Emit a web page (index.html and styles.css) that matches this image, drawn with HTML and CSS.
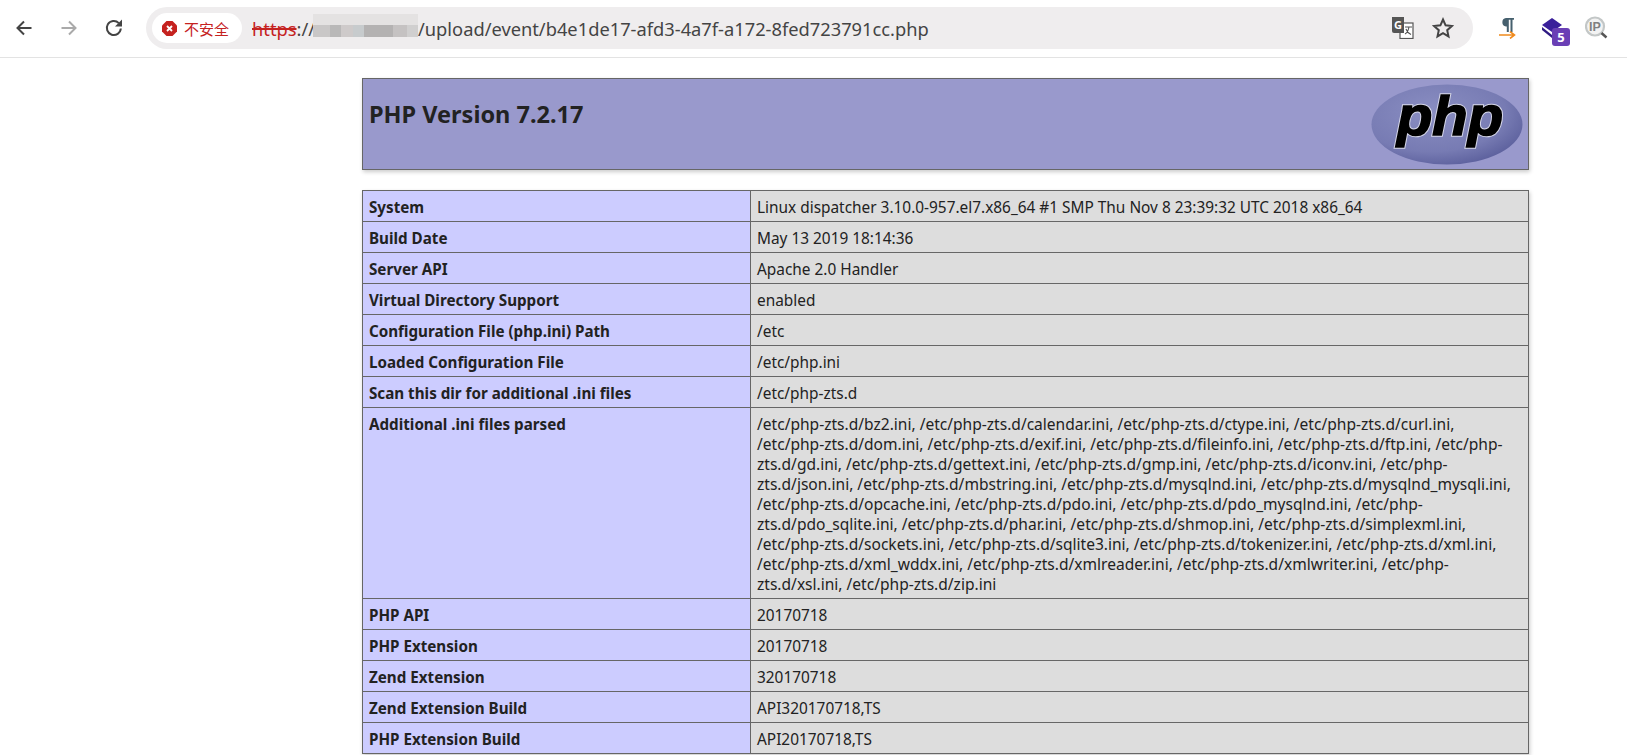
FILE: index.html
```html
<!DOCTYPE html>
<html lang="en">
  <head>
    <meta charset="UTF-8" />
    <title>phpinfo()</title>
    <link rel="stylesheet" href="styles.css">
  </head>
  <body>
    <div class="toolbar">
      <div class="nav-btn">
        <svg width="20" height="20" viewBox="0 0 20 20"><path d="M17.500 10H4M10 3.500L3.500 10l6.500 6.500" fill="none" stroke="#444" stroke-width="2"/></svg>
      </div>
      <div class="nav-btn">
        <svg width="20" height="20" viewBox="0 0 20 20"><path d="M2.500 10H16M10 3.500l6.500 6.500-6.500 6.500" fill="none" stroke="#aaa" stroke-width="2"/></svg>
      </div>
      <div class="nav-btn">
        <svg width="20" height="20" viewBox="0 0 20 20"><path d="M16.800 10.500a7 7 0 1 1-2-5.400" fill="none" stroke="#444" stroke-width="2"/><path d="M18 1.500v7h-7z" fill="#444"/></svg>
      </div>
      <div class="omnibox">
        <div class="chip">
          <svg width="15" height="15" viewBox="0 0 15 15"><path d="M4.500 0h6L15 4.500v6L10.500 15h-6L0 10.500v-6z" fill="#c5221f"/><path d="M5 5l5 5M10 5l-5 5" stroke="#fff" stroke-width="1.800"/></svg>
          <span class="chip-text">不安全</span>
        </div>
        <div class="url">
          <span class="scheme">https</span><span>://</span><span class="blur-host"></span><span>/upload/event/b4e1de17-afd3-4a7f-a172-8fed723791cc.php</span>
        </div>
        <div class="omni-icons">
          <svg width="23" height="22" viewBox="0 0 23 22">
            <rect x="9" y="6" width="13" height="15.500" fill="#fff" stroke="#555" stroke-width="1.200"/>
            <path d="M1 0h12v16H3a2 2 0 0 1-2-2z" fill="#555"/>
            <text x="3" y="12" class="translate-g">G</text>
            <path d="M14 10h7M18 9.500c-.500 4-2 6.500-4 7.500M15 12c1 3 3 4.500 5 5.500" fill="none" stroke="#555" stroke-width="1.100"/>
          </svg>
          <svg width="22" height="22" viewBox="0 0 22 22"><path d="M11 2.500l2.600 5.800 6.300.700-4.700 4.200 1.300 6.200L11 16.200l-5.500 3.200 1.300-6.200L2.100 9l6.300-.7z" fill="none" stroke="#444" stroke-width="2"/></svg>
        </div>
      </div>
      <div class="extensions">
        <div class="ext">
          <svg width="14" height="14" viewBox="0 0 14 14"><path d="M6 0h8v1.800h-1.500V14h-2V1.800H8.800V14h-2V8.500H6A4.300 4.300 0 0 1 6 0z" fill="#46606e"/></svg>
          <svg class="pilcrow-arrow" width="17" height="8" viewBox="0 0 17 8"><path d="M0 4h15M11 .5L15.500 4 11 7.500" fill="none" stroke="#f08a1d" stroke-width="1.600"/></svg>
        </div>
        <div class="ext stack">
          <svg width="22" height="20" viewBox="0 0 22 20"><path d="M11 0l10 7-10 7L1 7z" fill="#3a1f9a"/><path d="M1 9l10 8v3L1 12z" fill="#2e1a82"/></svg>
          <span class="stack-badge">5</span>
        </div>
        <div class="ext">
          <svg width="24" height="24" viewBox="0 0 24 24">
            <circle cx="10" cy="10.500" r="9" fill="#f3f3f3" stroke="#c3c7c7" stroke-width="2.200"/>
            <text x="10" y="15" class="ip-text">IP</text>
            <path d="M16.500 17l5 4.500" stroke="#555" stroke-width="2.500"/>
          </svg>
        </div>
      </div>
    </div>

    <div class="page">
      <div class="center">
        <div class="php-header">
          <h1>PHP Version 7.2.17</h1>
          <svg class="php-logo" width="152" height="81" viewBox="0 0 152 81">
            <defs>
              <radialGradient id="logo-fill" cx="40%" cy="35%" r="70%">
                <stop offset="0" stop-color="#8a8ec2"/>
                <stop offset="0.7" stop-color="#777bb3"/>
                <stop offset="1" stop-color="#5b5f9c"/>
              </radialGradient>
            </defs>
            <ellipse cx="76" cy="40.500" rx="75.500" ry="40" fill="url(#logo-fill)"/>
            <text x="26" y="51" textLength="106" lengthAdjust="spacingAndGlyphs" class="php-mark php-mark-halo">php</text>
            <text x="26" y="51" textLength="106" lengthAdjust="spacingAndGlyphs" class="php-mark">php</text>
          </svg>
        </div>

        <table class="info">
          <tr><td class="e">System</td><td class="v">Linux dispatcher 3.10.0-957.el7.x86_64 #1 SMP Thu Nov 8 23:39:32 UTC 2018 x86_64</td></tr>
          <tr><td class="e">Build Date</td><td class="v">May 13 2019 18:14:36</td></tr>
          <tr><td class="e">Server API</td><td class="v">Apache 2.0 Handler</td></tr>
          <tr><td class="e">Virtual Directory Support</td><td class="v">enabled</td></tr>
          <tr><td class="e">Configuration File (php.ini) Path</td><td class="v">/etc</td></tr>
          <tr><td class="e">Loaded Configuration File</td><td class="v">/etc/php.ini</td></tr>
          <tr><td class="e">Scan this dir for additional .ini files</td><td class="v">/etc/php-zts.d</td></tr>
          <tr><td class="e">Additional .ini files parsed</td><td class="v ini-list">/etc/php-zts.d/bz2.ini, /etc/php-zts.d/calendar.ini, /etc/php-zts.d/ctype.ini, /etc/php-zts.d/curl.ini, /etc/php-zts.d/dom.ini, /etc/php-zts.d/exif.ini, /etc/php-zts.d/fileinfo.ini, /etc/php-zts.d/ftp.ini, /etc/php-zts.d/gd.ini, /etc/php-zts.d/gettext.ini, /etc/php-zts.d/gmp.ini, /etc/php-zts.d/iconv.ini, /etc/php-zts.d/json.ini, /etc/php-zts.d/mbstring.ini, /etc/php-zts.d/mysqlnd.ini, /etc/php-zts.d/mysqlnd_mysqli.ini, /etc/php-zts.d/opcache.ini, /etc/php-zts.d/pdo.ini, /etc/php-zts.d/pdo_mysqlnd.ini, /etc/php-zts.d/pdo_sqlite.ini, /etc/php-zts.d/phar.ini, /etc/php-zts.d/shmop.ini, /etc/php-zts.d/simplexml.ini, /etc/php-zts.d/sockets.ini, /etc/php-zts.d/sqlite3.ini, /etc/php-zts.d/tokenizer.ini, /etc/php-zts.d/xml.ini, /etc/php-zts.d/xml_wddx.ini, /etc/php-zts.d/xmlreader.ini, /etc/php-zts.d/xmlwriter.ini, /etc/php-zts.d/xsl.ini, /etc/php-zts.d/zip.ini</td></tr>
          <tr><td class="e">PHP API</td><td class="v">20170718</td></tr>
          <tr><td class="e">PHP Extension</td><td class="v">20170718</td></tr>
          <tr><td class="e">Zend Extension</td><td class="v">320170718</td></tr>
          <tr><td class="e">Zend Extension Build</td><td class="v">API320170718,TS</td></tr>
          <tr><td class="e">PHP Extension Build</td><td class="v">API20170718,TS</td></tr>
        </table>
      </div>
    </div>
  </body>
</html>
```

FILE: styles.css
```css
* {
  margin: 0;
  padding: 0;
  box-sizing: border-box;
}
html,
body {
  width: 100%;
  height: 100%;
  overflow: hidden;
  background-color: #fff;
}
body {
  font-family: "Noto Sans", "Noto Sans CJK SC", sans-serif;
  color: #222;
}

.toolbar {
  display: flex;
  align-items: center;
  height: 58px;
  padding-left: 1px;
  padding-bottom: 1px;
  border-bottom: 1px solid #e3e3e3;
}
.nav-btn {
  width: 45px;
  height: 45px;
  display: flex;
  align-items: center;
  justify-content: center;
}
.omnibox {
  display: flex;
  align-items: center;
  width: 1327px;
  height: 42px;
  margin-left: 10px;
  padding-left: 6px;
  border-radius: 21px;
  background-color: #efedee;
}
.chip {
  display: flex;
  align-items: center;
  gap: 7px;
  width: 90px;
  height: 30px;
  padding-left: 10px;
  border-radius: 15px;
  background-color: #fff;
}
.chip-text {
  font-size: 15px;
  color: #c5221f;
}
.url {
  display: flex;
  align-items: center;
  margin-left: 10px;
  font-size: 18.3px;
  color: #444;
  white-space: nowrap;
}
.scheme {
  color: #c5221f;
  text-decoration: line-through;
  text-decoration-thickness: 2px;
}
.blur-host {
  width: 105px;
  height: 23px;
  margin-left: -2px;
  margin-bottom: 5px;
  background:
    linear-gradient(#e4e2e2 50%, transparent 50%),
    linear-gradient(90deg, #c9c7c7 0 16%, #b9b8b8 16% 27%, #cecaca 27% 38%, #c7cbcd 38% 49%, #b4b2b2 49% 76%, #c5c2c2 76% 90%, #d0cfcf 90%);
}
.omni-icons {
  display: flex;
  align-items: center;
  gap: 18px;
  margin-left: auto;
  padding-right: 19px;
}
.translate-g {
  font-family: "Noto Sans", sans-serif;
  font-size: 11px;
  font-weight: 700;
  fill: #fff;
}

.extensions {
  display: flex;
  align-items: center;
  gap: 19px;
  margin-left: 21px;
}
.ext {
  width: 26px;
  height: 34px;
  display: flex;
  flex-direction: column;
  align-items: center;
  justify-content: center;
}
.pilcrow-arrow {
  margin-top: -1px;
}
.stack {
  position: relative;
}
.stack-badge {
  position: absolute;
  right: -5px;
  bottom: -1px;
  width: 18px;
  height: 18px;
  border-radius: 3px;
  background-color: #6a3fb5;
  color: #fff;
  font-size: 13px;
  font-weight: 700;
  line-height: 18px;
  text-align: center;
}
.ip-text {
  font-family: "Liberation Sans", sans-serif;
  font-size: 12.5px;
  font-weight: 700;
  text-anchor: middle;
  fill: #808080;
}

.page {
  padding-left: 362px;
}
.center {
  width: 1167px;
}
.php-header {
  display: flex;
  justify-content: space-between;
  align-items: flex-start;
  height: 92px;
  margin-top: 20px;
  padding: 5px 5px 0 6px;
  border: 1px solid #666;
  background-color: #9999cc;
  box-shadow: 1px 2px 4px #ccc;
}
.php-header h1 {
  margin-top: 14px;
  font-size: 23.5px;
  line-height: 32px;
  font-weight: 700;
}
.php-logo {
  display: block;
}
.php-mark {
  font-family: "Liberation Sans", sans-serif;
  font-size: 55px;
  font-weight: 700;
  font-style: italic;
  fill: #000;
  stroke: #000;
  stroke-width: 1.6px;
}
.php-mark-halo {
  stroke: #d5d6e8;
  stroke-width: 3.5px;
}

.info {
  width: 100%;
  margin-top: 20px;
  border-collapse: collapse;
  table-layout: fixed;
  box-shadow: 1px 2px 4px #ccc;
  font-size: 15.4px;
  line-height: 20px;
}
.info td {
  padding: 6px 6px 4px;
  border: 1px solid #666;
  vertical-align: top;
}
.info .v {
  padding: 7px 6px 3px;
}
.info .ini-list {
  padding: 6px 14px 4px 6px;
  font-size: 15.55px;
}
.e {
  width: 388px;
  background-color: #ccccff;
  font-size: 15.2px;
  font-weight: 700;
}
.v {
  background-color: #dddddd;
}
```
